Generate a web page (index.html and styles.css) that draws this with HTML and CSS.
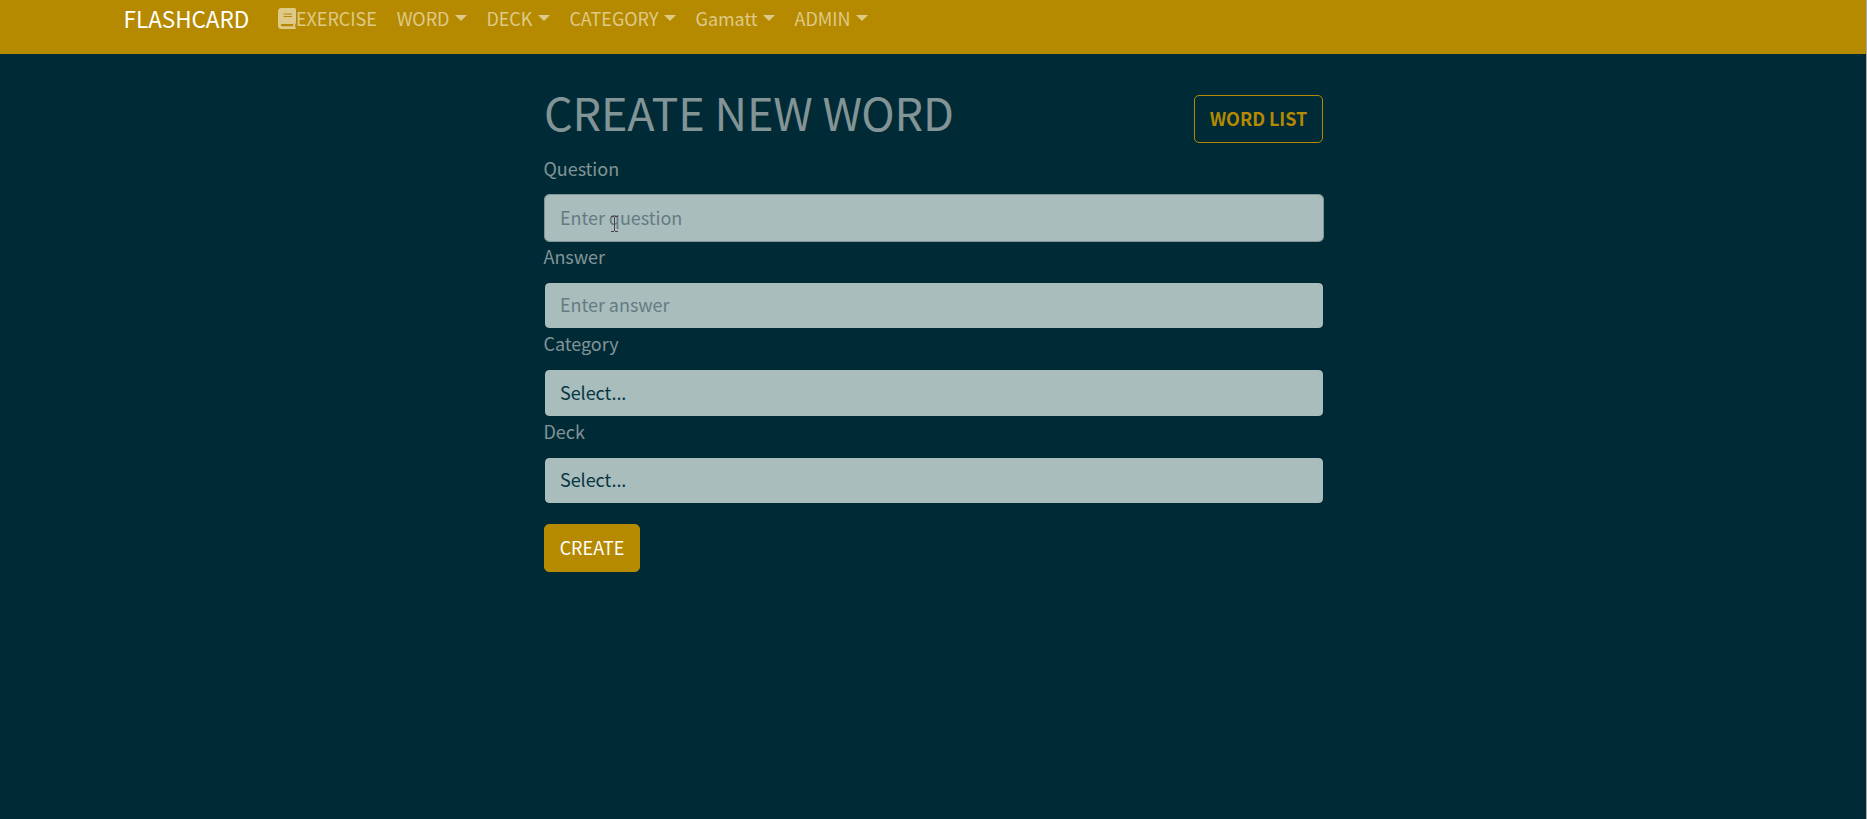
FILE: index.html
```html
<!DOCTYPE html>
<html lang="en">
<head>
<meta charset="utf-8">
<title>Flashcard</title>
<link rel="stylesheet" href="styles.css">
</head>
<body>
<nav class="navbar">
  <a class="brand">FLASHCARD</a>
  <ul class="nav">
    <li class="nav-item exercise"><svg class="book" viewBox="0 0 18 21"><path fill="currentColor" fill-rule="evenodd" d="M3.500 0H16.500Q18 0 18 1.500V14.500Q18 15.500 17.200 16V19Q18 19.300 18 20Q18 21 17 21H3.500Q0 21 0 17.500V3.500Q0 0 3.500 0ZM4 16Q2.800 16 2.800 17.200Q2.800 18.200 4 18.200H15.200V16ZM5.500 5.600V6.600H14V5.600ZM5.500 8V9H14V8Z"/></svg><span>EXERCISE</span></li>
    <li class="nav-item"><span>WORD</span><i class="caret"></i></li>
    <li class="nav-item"><span>DECK</span><i class="caret"></i></li>
    <li class="nav-item"><span>CATEGORY</span><i class="caret"></i></li>
    <li class="nav-item"><span>Gamatt</span><i class="caret"></i></li>
    <li class="nav-item"><span>ADMIN</span><i class="caret"></i></li>
  </ul>
</nav>
<main class="content">
  <header class="heading">
    <h1 class="title">CREATE NEW WORD</h1>
    <a class="button outline"><span class="caption">WORD LIST</span></a>
  </header>
  <form class="form">
    <label class="label">Question</label>
    <div class="field focused"><span class="placeholder">Enter question</span>
      <svg class="pointer" viewBox="0 0 7 16"><path d="M0 .5h3M4 .5h3M3.500 1v14M0 15.500h3M4 15.500h3" stroke="#4b4347" fill="none"/></svg>
    </div>
    <label class="label">Answer</label>
    <div class="field"><span class="placeholder">Enter answer</span></div>
    <label class="label">Category</label>
    <div class="field">Select...</div>
    <label class="label">Deck</label>
    <div class="field">Select...</div>
    <button class="button primary" type="button"><span class="caption">CREATE</span></button>
  </form>
</main>
</body>
</html>
```
FILE: styles.css
```css
* { box-sizing: border-box; }
html { height: 100%; overflow: hidden; background: #002b36; }
body {
  margin: 0;
  height: 100%;
  border-right: 1px solid #a9abab;
  font: 18px/30px "Noto Sans CJK SC", "Open Sans", sans-serif;
  letter-spacing: -0.04px;
  color: #839496;
}
.navbar {
  display: flex;
  align-items: flex-start;
  height: 54px;
  padding: 3px 0 0 123.500px;
  background: #b58900;
}
.brand { width: 144.500px; color: #fff; font-size: 22.500px; }
.nav { display: flex; margin: 0; padding: 0; list-style: none; color: #dfc988; }
.nav-item { display: flex; align-items: center; padding: 0 10px; }
.book { width: 18px; height: 21px; margin-top: 1px; }
.caret {
  margin: 0 -0.500px 0 5.500px;
  border: 6px solid transparent;
  border-top-color: currentColor;
  border-bottom: 0;
}
.content { width: 780px; margin: 0 auto 0 544px; padding-top: 41px; }
.heading { display: flex; justify-content: space-between; height: 58px; padding-right: 1px; }
.title {
  margin: -13px 0 0;
  font-size: 45px;
  line-height: 60px;
  font-weight: 400;
  letter-spacing: -0.2px;
}
.button {
  display: flex;
  align-items: center;
  justify-content: center;
  height: 48px;
  padding: 0;
  border: 1px solid #b58900;
  border-radius: 5px;
  font: inherit;
}
.caption { padding-bottom: 2px; }
.outline { width: 129px; color: #b58900; font-weight: 700; }
.primary { width: 96px; margin-top: 20px; color: #fff; background: #b58900; }
.label { display: block; margin: 0 0 11px -0.500px; line-height: 29.500px; }
.label:nth-of-type(even) { margin-bottom: 10px; line-height: 30.500px; }
.field {
  position: relative;
  display: flex;
  align-items: center;
  height: 47.500px;
  margin-bottom: -0.500px;
  padding: 0 15px 2px;
  border: 1px solid #002b36;
  border-radius: 5px;
  background: #a9bdbd;
  background-clip: padding-box;
  color: #073642;
}
.form { padding-top: 0.500px; }
.focused { border-color: #839496; }
.placeholder { color: #657b83; }
.pointer { position: absolute; left: 66px; top: 21px; width: 7px; height: 16px; }
```
